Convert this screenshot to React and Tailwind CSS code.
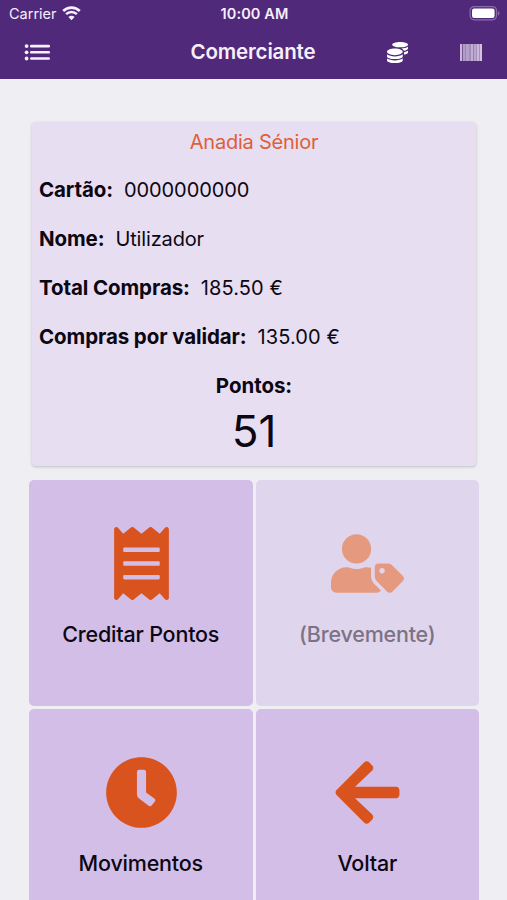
import React from 'react';
import clsx from 'clsx';
import { FaReceipt, FaUserTag, FaClock, FaArrowLeft, FaCoins } from 'react-icons/fa';

const details = [
    { label: 'Cartão:', value: '0000000000', valueClass: 'tracking-[-0.1px]' },
    { label: 'Nome:', value: 'Utilizador', valueClass: 'tracking-[-0.15px]' },
    { label: 'Total Compras:', value: '185.50 €', valueClass: 'tracking-[0.1px]' },
    { label: 'Compras por validar:', value: '135.00 €', valueClass: 'tracking-[0.1px]' },
];

const actions = [
    { label: 'Creditar Pontos', icon: FaReceipt },
    { label: '(Brevemente)', icon: FaUserTag, disabled: true },
    { label: 'Movimentos', icon: FaClock },
    { label: 'Voltar', icon: FaArrowLeft },
];

// [x, width, opacity]
const bars = [
    [0, 2, 0.75],
    [2, 1, 0.25],
    [3, 2, 0.6],
    [5, 1, 0.5],
    [6, 3, 0.62],
    [9, 2, 0.52],
    [11, 2, 0.7],
    [13, 1, 0.45],
    [14, 2, 0.65],
    [16, 1, 0.55],
    [17, 2, 0.75],
    [19, 1, 0.55],
    [20, 2, 0.8],
];

function WifiIcon() {
    return (
        <svg width="19" height="15" viewBox="0 0 19 15" fill="none" stroke="#f7effb">
            <path d="M1.2 5a11.8 11.8 0 0 1 16.6 0" strokeWidth="2.6" />
            <path d="M4.1 8.2a7.6 7.6 0 0 1 10.8 0" strokeWidth="2.4" />
            <path d="M9.5 14.2 6.4 11a4.4 4.4 0 0 1 6.2 0z" fill="#f7effb" stroke="none" />
        </svg>
    );
}

function BatteryIcon() {
    return (
        <svg width="31" height="15" viewBox="0 0 31 15">
            <rect x="1.1" y="0.6" width="26.4" height="13.2" rx="4" fill="none" stroke="#8a6cab" strokeWidth="1.2" />
            <rect x="3" y="2.5" width="22.6" height="9.4" rx="2.2" fill="#fff" />
            <path d="M28.9 4.9c2 .8 2 3.8 0 4.6z" fill="#8a6cab" />
        </svg>
    );
}

function MenuIcon() {
    return (
        <svg width="26" height="17" viewBox="0 0 26 17" fill="#f7effb">
            {[2.1, 8.3, 14.5].map((y) => (
                <g key={y}>
                    <circle cx="2.6" cy={y} r="1.9" />
                    <rect x="6" y={y - 1.3} width="20" height="2.6" rx="1.2" />
                </g>
            ))}
        </svg>
    );
}

function BarcodeIcon() {
    return (
        <svg width="22" height="17" viewBox="0 0 22 17" fill="#f3e8f8">
            {bars.map(([x, w, o]) => (
                <rect key={x} x={x} y="0" width={w} height="17" opacity={o} />
            ))}
        </svg>
    );
}

function Header() {
    return (
        <header className="h-[79px] bg-[#51297b] text-[#f7effb]">
            <div className="grid h-[27px] grid-cols-3 items-center pl-[9px] pr-[7px]">
                <div className="flex items-center gap-[5px]">
                    <span className="text-[14.5px] leading-[27px]">Carrier</span>
                    <WifiIcon />
                </div>
                <span className="text-center text-[14.5px] font-semibold tracking-[0.1px]">10:00 AM</span>
                <div className="flex justify-end">
                    <BatteryIcon />
                </div>
            </div>
            <div className="grid h-[51px] grid-cols-3 items-center pl-6 pr-[25px]">
                <MenuIcon />
                <h1 className="text-center text-[20.5px] font-semibold tracking-[-0.15px]">Comerciante</h1>
                <div className="flex items-center justify-end gap-[52px]">
                    <FaCoins size={21} color="#fff" />
                    <BarcodeIcon />
                </div>
            </div>
        </header>
    );
}

function InfoCard() {
    return (
        <section className="ml-8 mt-[43px] h-[344px] w-[444px] rounded-[4px] bg-[#e7def2] px-[7px] pt-1 shadow-[0_1px_3px_rgba(0,0,0,0.2)]">
            <h2 className="h-8 text-center text-[20px] leading-8 text-[#dc6038]">
                <span className="tracking-[-0.23px]">Anadia Sénior</span>
            </h2>
            <div className="-mt-px">
                {details.map((item) => (
                    <div key={item.label} className="mt-[17px] flex h-8 items-center gap-[11px] whitespace-nowrap text-[20px]">
                        <span className="text-[20.5px] font-bold tracking-[-0.1px]">{item.label}</span>
                        <span className={item.valueClass}>{item.value}</span>
                    </div>
                ))}
            </div>
            <div className="mt-[17px] text-center">
                <div className="h-8 text-[20.5px] font-bold leading-8">
                    <span className="tracking-[-0.05px]">Pontos:</span>
                </div>
                <div className="mt-1 text-[44px] leading-[50px]">51</div>
            </div>
        </section>
    );
}

function ActionTile({ label, icon: Icon, disabled }) {
    return (
        <button
            disabled={disabled}
            className={clsx(
                'flex h-[226px] flex-col items-center rounded-[5px] pt-[47px]',
                disabled ? 'bg-[#dfd5ed]' : 'bg-[#d3bee8]'
            )}
        >
            <Icon className="ml-px" size={73} color={disabled ? '#e59a80' : '#d9531e'} />
            <span
                className={clsx(
                    'mt-[18px] text-[21.5px] font-medium leading-8 tracking-[-0.2px]',
                    disabled ? 'text-[#7b7384]' : 'text-[#0c0712]'
                )}
            >
                {label}
            </span>
        </button>
    );
}

function App() {
    return (
        <div className="h-[900px] w-[507px] overflow-hidden bg-[#efeef3] font-['Inter',sans-serif] text-[#0c0712]">
            <Header />
            <InfoCard />
            <div className="ml-[29px] mt-[14px] grid w-[450px] grid-cols-2 gap-[3px]">
                {actions.map((action) => (
                    <ActionTile key={action.label} {...action} />
                ))}
            </div>
        </div>
    );
}

export default App;
